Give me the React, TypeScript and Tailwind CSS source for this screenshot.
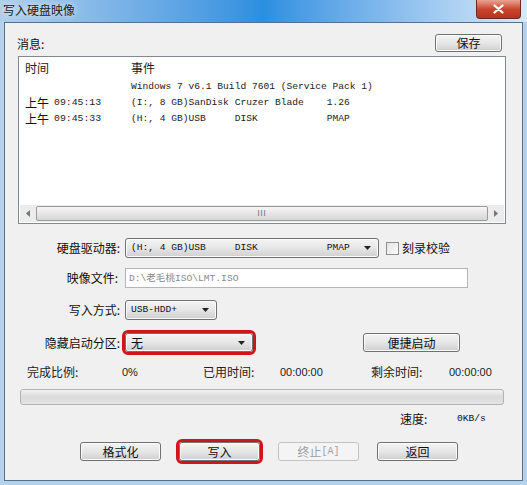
import React from "react";

const cjk = "font-['Noto_Sans_CJK_SC','Microsoft_YaHei',sans-serif]";
const mono = "font-['Liberation_Mono','Courier_New',monospace]";

const face =
  "rounded-[3px] border border-[#707070] bg-gradient-to-b from-[#f4f4f4] via-[#e6e6e6] to-[#cfcfcf] text-[12px] text-[#111] shadow-[inset_0_0_0_1px_#fbfbfb]";
const btn = `flex items-center justify-center ${face}`;
const combo = `flex items-center justify-between pl-[5px] pr-[7px] ${face}`;

const Arrow = () => (
  <svg width="7" height="4" viewBox="0 0 7 4" className="shrink-0">
    <path d="M0 0h7L3.5 4z" fill="#222" />
  </svg>
);

const rows = [
  { time: "", text: "Windows 7 v6.1 Build 7601 (Service Pack 1)" },
  { time: "09:45:13", text: "(I:, 8 GB)SanDisk Cruzer Blade    1.26" },
  { time: "09:45:33", text: "(H:, 4 GB)USB     DISK            PMAP" },
];

export default function App() {
  return (
    <div className={`w-[527px] h-[485px] flex flex-col bg-[#b4d2ec] ${cjk} overflow-hidden`}>
      {/* title bar */}
      <div className="h-[22px] shrink-0 flex items-start justify-between bg-gradient-to-r from-[#b0cfeb] via-[#2b8fe0] to-[#d8e9f8]">
        <span className="pl-[3px] pt-[1px] text-[12px] leading-[18px] text-[#1b1b1b] [text-shadow:0_0_6px_#fff]">
          写入硬盘映像
        </span>
        <div className="mr-[6px] w-[45px] h-[19px] rounded-b-[4px] border border-t-0 border-[#6d2a23] bg-gradient-to-b from-[#e8a493] via-[#c9452e] to-[#b8321c] flex items-center justify-center">
          <svg width="11" height="10" viewBox="0 0 11 10">
            <path d="M1.5 1.5l8 7M9.5 1.5l-8 7" stroke="#fff" strokeWidth="2.2" strokeLinecap="round" />
          </svg>
        </div>
      </div>

      {/* client area */}
      <div className="mx-[4px] mb-[4px] flex-1 flex flex-col border border-[#55708c] bg-[#f0f0f0] text-[#111]">
        <div className="mt-[11px] pl-[12px] pr-[20px] h-[18px] flex items-center justify-between">
          <span className="text-[12px] leading-none pt-[2px]">消息:</span>
          <div className={`${btn} w-[67px] h-[18px]`}>保存</div>
        </div>

        {/* listbox */}
        <div className="mt-[4px] ml-[13px] w-[488px] h-[168px] border border-[#828790] bg-white flex flex-col">
          <div className="h-[21px] flex items-center pl-[6px] text-[12px] text-[#222]">
            <span className="w-[106px]">时间</span>
            <span>事件</span>
          </div>
          <div className="flex-1 pt-[1px]">
            {rows.map((r, i) => (
              <div key={i} className="h-[16px] flex items-center pl-[6px]">
                <span className="w-[106px] flex items-center gap-[5px]">
                  {r.time && (
                    <>
                      <span className="text-[12px] leading-none">上午</span>
                      <span className={`${mono} text-[9.8px] text-[#222]`}>{r.time}</span>
                    </>
                  )}
                </span>
                <span className={`${mono} text-[9.6px] whitespace-pre text-[#222]`}>{r.text}</span>
              </div>
            ))}
          </div>
          <div className="h-[17px] mb-[1px] mx-[1px] bg-[#ececec] flex items-center">
            <div className="w-[16px] flex justify-center">
              <svg width="4" height="7" viewBox="0 0 4 7">
                <path d="M4 0v7L0 3.5z" fill="#777" />
              </svg>
            </div>
            <div className="flex-1 h-[15px] rounded-[2px] border border-[#9a9a9a] bg-gradient-to-b from-[#f6f6f6] to-[#d6d6d6] flex items-center justify-center">
              <span className="text-[7px] leading-none text-[#555] tracking-[1px]">III</span>
            </div>
            <div className="w-[16px] flex justify-center">
              <svg width="4" height="7" viewBox="0 0 4 7">
                <path d="M0 0v7L4 3.5z" fill="#777" />
              </svg>
            </div>
          </div>
        </div>

        {/* form */}
        <div className="mt-[14px] flex items-center h-[20px]">
          <span className="w-[115px] text-right text-[12px]">硬盘驱动器:</span>
          <div className={`ml-[5px] w-[254px] h-[20px] ${combo}`}>
            <span className={`${mono} text-[9.6px] whitespace-pre`}>(H:, 4 GB)USB     DISK            PMAP</span>
            <Arrow />
          </div>
          <div className="ml-[7px] w-[13px] h-[13px] border border-[#8f8f8f] bg-gradient-to-br from-[#e4e4e4] to-[#fafafa]" />
          <span className="ml-[3px] text-[12px]">刻录校验</span>
        </div>

        <div className="mt-[10px] flex items-center h-[20px]">
          <span className="w-[115px] text-right pr-[2px] text-[12px]">映像文件:</span>
          <div className="ml-[5px] w-[343px] h-[20px] border border-[#b5b5b5] bg-white flex items-center pl-[3px]">
            <span className="text-[9.6px] text-[#8a8a8a] whitespace-pre">
              <span className={mono}>D:\</span>老毛桃<span className={mono}>ISO\LMT.ISO</span>
            </span>
          </div>
        </div>

        <div className="mt-[12px] flex items-center h-[20px]">
          <span className="w-[115px] text-right text-[12px]">写入方式:</span>
          <div className={`ml-[5px] w-[92px] h-[20px] ${combo}`}>
            <span className={`${mono} text-[9.6px]`}>USB-HDD+</span>
            <Arrow />
          </div>
        </div>

        <div className="mt-[13px] flex items-center h-[19px]">
          <span className="w-[115px] text-right text-[12px]">隐藏启动分区:</span>
          <div className={`ml-[5px] w-[128px] h-[19px] ${combo} outline outline-[3px] outline-[#d0141c]`}>
            <span className="text-[12px]">无</span>
            <Arrow />
          </div>
          <div className={`ml-[110px] w-[97px] h-[19px] ${btn}`}>便捷启动</div>
        </div>

        <div className="mt-[13px] h-[14px] flex items-center pl-[22px] text-[12px] text-[#222]">
          <span className="w-[95px]">完成比例:</span>
          <span className="w-[81px] font-['Liberation_Sans',sans-serif] text-[11px]">0%</span>
          <span className="w-[77px]">已用时间:</span>
          <span className="w-[91px] font-['Liberation_Sans',sans-serif] text-[11px]">00:00:00</span>
          <span className="w-[78px]">剩余时间:</span>
          <span className="font-['Liberation_Sans',sans-serif] text-[11px]">00:00:00</span>
        </div>

        <div className="mt-[10px] ml-[15px] w-[484px] h-[16px] rounded-[3px] border border-[#b2b2b2] bg-gradient-to-b from-[#f2f2f2] via-[#dadada] to-[#e4e4e4]" />

        <div className="mt-[7px] h-[14px] flex items-center pl-[395px] text-[12px]">
          <span className="w-[57px]">速度:</span>
          <span className={`${mono} text-[9.6px]`}>0KB/s</span>
        </div>

        <div className="mt-[16px] flex items-center pl-[75px] gap-[18px]">
          <div className={`${btn} w-[81px] h-[19px]`}>格式化</div>
          <div className={`${btn} w-[81px] h-[19px] outline outline-[3px] outline-[#d0141c]`}>写入</div>
          <div className="flex items-center justify-center w-[81px] h-[19px] rounded-[3px] border border-[#c2c2c2] bg-[#f4f4f4] text-[12px] text-[#a0a0a0]">
            终止<span className={`${mono} text-[10px]`}>[A]</span>
          </div>
          <div className={`${btn} w-[81px] h-[19px]`}>返回</div>
        </div>
      </div>
    </div>
  );
}
